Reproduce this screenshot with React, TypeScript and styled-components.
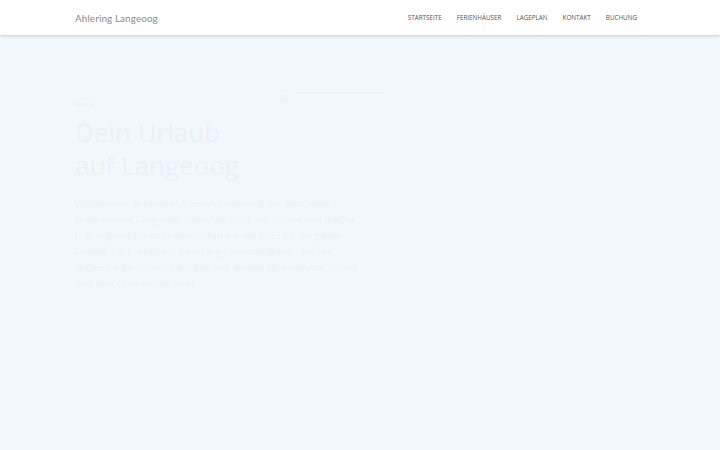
import React from "react";
import styled, { createGlobalStyle } from "styled-components";

const Global = createGlobalStyle`
  html, body { margin: 0; padding: 0; background: #f2f7fb; }
  body { font-family: "Open Sans", "Noto Sans", sans-serif; }
`;

const Page = styled.div`
  min-height: 450px;
  background: #f2f7fb;
`;

const Header = styled.header`
  height: 35px;
  background: #ffffff;
  box-shadow: 0 1px 3px rgba(0, 0, 0, 0.18);
  display: flex;
  align-items: center;
  justify-content: space-between;
  padding: 0 83px 0 75px;
  position: relative;
  z-index: 1;
`;

const Logo = styled.div`
  font-family: "Lato", "Open Sans", sans-serif;
  font-size: 9.8px;
  color: #8a8a8a;
  letter-spacing: 0.15px;
  padding-top: 1px;
`;

const Nav = styled.nav`
  display: flex;
  gap: 15px;
`;

const NavItem = styled.a`
  font-size: 6.3px;
  color: #555;
  text-transform: uppercase;
  text-decoration: none;
`;

const Hero = styled.section`
  display: grid;
  grid-template-columns: 205px 110px;
  padding: 57px 0 0 75px;
`;

const Left = styled.div`
  display: flex;
  flex-direction: column;
  padding-top: 9px;
`;

const Kicker = styled.div`
  font-size: 6px;
  line-height: 8px;
  color: #e9f0f7;
  margin-bottom: 7px;
  letter-spacing: 0.5px;
`;

const Title = styled.h1`
  margin: 0;
  font-size: 26px;
  line-height: 33px;
  font-weight: 400;
  color: #eaf1f7;
  white-space: nowrap;
`;

const Text = styled.p`
  margin: 14px 0 0;
  width: 285px;
  font-size: 9.5px;
  line-height: 16px;
  color: #ecf2f8;
`;

const Media = styled.div`
  display: flex;
  align-items: flex-start;
  gap: 8px;
`;

const Dot = styled.div`
  width: 8px;
  height: 8px;
  margin-top: 3px;
  background: #eef4f9;
`;

const Bar = styled.div`
  height: 2px;
  width: 88px;
  background: #ebf2f8;
`;

export default function App() {
  return (
    <Page>
      <Global />
      <Header>
        <Logo>Ahlering Langeoog</Logo>
        <Nav>
          <NavItem>Startseite</NavItem>
          <NavItem>Ferienhäuser</NavItem>
          <NavItem>Lageplan</NavItem>
          <NavItem>Kontakt</NavItem>
          <NavItem>Buchung</NavItem>
        </Nav>
      </Header>
      <Hero>
        <Left>
          <Kicker>MOIN</Kicker>
          <Title>
            Dein Urlaub
            <br />
            auf Langeoog
          </Title>
          <Text>
            Willkommen in unseren Ferienhäusern auf der autofreien Nordseeinsel Langeoog.
            Genießen Sie Ruhe, Strand und frische Luft in gemütlichen Unterkünften mit
            viel Platz für die ganze Familie. Ob Kurzurlaub oder lange Sommerferien –
            bei uns finden Sie Ihr Zuhause auf Zeit, nur wenige Minuten vom Strand
            und vom Ortskern entfernt.
          </Text>
        </Left>
        <Media>
          <Dot />
          <Bar />
        </Media>
      </Hero>
    </Page>
  );
}
